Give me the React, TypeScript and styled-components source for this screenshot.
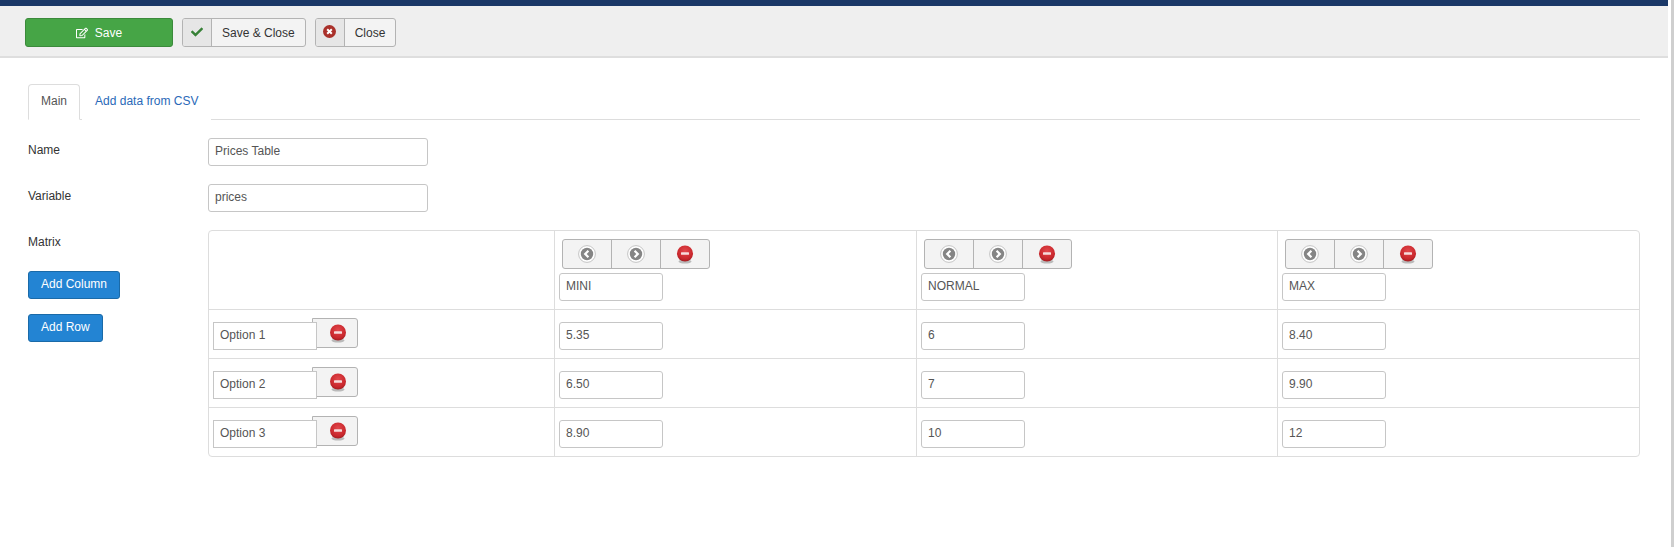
import React from "react";
import styled, { createGlobalStyle } from "styled-components";
import { FaCheck, FaRegEdit } from "react-icons/fa";

const Global = createGlobalStyle`
  html, body { margin: 0; padding: 0; background: #fff; height: 100%; overflow: hidden; }
  body { font-family: "Liberation Sans", Arial, sans-serif; font-size: 12px; color: #333; }
  * { box-sizing: border-box; }
`;

const Shell = styled.div`
  display: flex;
  height: 547px;
`;
const Main = styled.div`
  flex: 1;
  min-width: 0;
`;
const ScrollGutter = styled.div`
  width: 6px;
  background: #fff;
  border-left: 3px solid #fff;
  border-right: 3px solid #cfcfcf;
`;
const TopBar = styled.div`
  height: 6px;
  background: #1a3867;
`;
const Toolbar = styled.div`
  display: flex;
  gap: 9px;
  height: 52px;
  padding: 12px 25px 0;
  background: #efefef;
  border-bottom: 2px solid #dedede;
`;
const SaveButton = styled.button`
  display: flex;
  align-items: center;
  justify-content: center;
  gap: 7px;
  width: 148px;
  height: 29px;
  padding: 0;
  border: 1px solid #3b8a3b;
  border-radius: 3px;
  background: #46a546;
  color: #fff;
  font: 12px "Liberation Sans", Arial, sans-serif;
`;
const ToolButton = styled.button`
  display: flex;
  align-items: stretch;
  height: 29px;
  padding: 0;
  border: 1px solid #b3b3b3;
  border-radius: 3px;
  background: #f3f3f3;
  color: #333;
  font: 12px "Liberation Sans", Arial, sans-serif;
  overflow: hidden;
`;
const ToolIcon = styled.span`
  display: flex;
  align-items: center;
  justify-content: center;
  width: 29px;
  padding-bottom: 2px;
  background: #e6e6e6;
  border-right: 1px solid #b3b3b3;
`;
const ToolLabel = styled.span`
  display: flex;
  align-items: center;
  padding: 0 10px;
`;
const Content = styled.div`
  padding: 26px 28px 0;
`;
const Tabs = styled.div`
  display: flex;
  height: 36px;
  border-bottom: 1px solid #ddd;
  margin-bottom: 18px;
`;
const Tab = styled.div<{ $active?: boolean }>`
  display: flex;
  align-items: center;
  height: 36px;
  padding: 0 12px 2px;
  margin-right: 2px;
  font-size: 12px;
  color: ${(p) => (p.$active ? "#555" : "#2a69b8")};
  background: #fff;
  border: 1px solid ${(p) => (p.$active ? "#ddd" : "transparent")};
  border-bottom: 1px solid ${(p) => (p.$active ? "#fff" : "transparent")};
  border-radius: 4px 4px 0 0;
`;
const FormRow = styled.div`
  display: flex;
  margin-bottom: 18px;
`;
const Side = styled.div`
  flex: 0 0 180px;
`;
const Label = styled.div`
  height: 24px;
  line-height: 24px;
  font-size: 12px;
  color: #333;
`;
const AddButton = styled.button`
  display: block;
  height: 28px;
  padding: 0 12px 2px;
  margin-top: 17px;
  border: 1px solid #1a6aa8;
  border-radius: 3px;
  background: #2384d3;
  color: #fff;
  font: 12px "Liberation Sans", Arial, sans-serif;
  & + & { margin-top: 15px; }
`;
const Field = styled.input<{ $width?: number; $square?: boolean }>`
  display: block;
  width: ${(p) => p.$width ?? 104}px;
  height: 28px;
  padding: 0 6px 2px;
  border: 1px solid #c6c6c6;
  border-radius: ${(p) => (p.$square ? "0" : "3px")};
  background: #fff;
  color: #555;
  font: 12px "Liberation Sans", Arial, sans-serif;
  position: relative;
`;
const MatrixWrap = styled.div`
  flex: 1;
  border: 1px solid #ddd;
  border-radius: 4px;
  overflow: hidden;
`;
const Matrix = styled.table`
  width: 100%;
  table-layout: fixed;
  border-collapse: separate;
  border-spacing: 0;
`;
const Column = styled.col<{ $w?: number }>`
  width: ${(p) => (p.$w ? `${p.$w}px` : "auto")};
`;
const Cell = styled.td`
  padding: 12px 4px 8px;
  vertical-align: top;
  border-top: 1px solid #ddd;
  border-left: 1px solid #ddd;
  tr:first-child > & { border-top: 0; padding-top: 8px; }
  &:first-child { border-left: 0; }
`;
const RowHead = styled(Cell)`
  padding-top: 8px;
`;
const RowHeadInner = styled.div`
  display: flex;
  align-items: flex-start;
`;
const OptionField = styled(Field)`
  margin-top: 4px;
  z-index: 1;
`;
const RemoveRow = styled.button`
  display: flex;
  align-items: center;
  justify-content: center;
  width: 46px;
  height: 30px;
  margin-left: -5px;
  padding: 0 0 0 5px;
  border: 1px solid #b3b3b3;
  border-radius: 0 3px 3px 0;
  background: #f3f3f3;
`;
const NavGroup = styled.div`
  display: flex;
  width: 148px;
  height: 30px;
  margin: 0 0 4px 3px;
  border: 1px solid #b3b3b3;
  border-radius: 3px;
  background: #f3f3f3;
`;
const NavButton = styled.button`
  flex: 1;
  display: flex;
  align-items: center;
  justify-content: center;
  padding: 0;
  border: 0;
  border-left: 1px solid #b3b3b3;
  background: transparent;
  &:first-child { border-left: 0; }
`;

const MinusIcon = ({ id }: { id: string }) => (
  <svg width="18" height="19" viewBox="0 0 18 19" aria-hidden="true">
    <defs>
      <radialGradient id={id} cx="50%" cy="35%" r="70%">
        <stop offset="0%" stopColor="#e2474c" />
        <stop offset="70%" stopColor="#c9272c" />
        <stop offset="100%" stopColor="#951a1e" />
      </radialGradient>
    </defs>
    <ellipse cx="9" cy="16.5" rx="6.5" ry="2" fill="#8a8a8a" opacity="0.55" />
    <circle cx="9" cy="8.5" r="8" fill={`url(#${id})`} />
    <rect x="5" y="7.2" width="8" height="2.6" rx="0.6" fill="#f6dcdc" />
  </svg>
);

const ArrowIcon = ({ dir }: { dir: "left" | "right" }) => (
  <svg width="18" height="18" viewBox="0 0 18 18" aria-hidden="true">
    <circle cx="9" cy="9" r="8.4" fill="#fff" stroke="#c4c4c4" strokeWidth="1" />
    <circle cx="9" cy="9" r="6.2" fill="#858585" />
    <path
      d={dir === "left" ? "M10.4 5.8 7.2 9l3.2 3.2" : "M7.6 5.8 10.8 9l-3.2 3.2"}
      fill="none"
      stroke="#fff"
      strokeWidth="2.2"
    />
  </svg>
);

const CloseIcon = () => (
  <svg width="13" height="13" viewBox="0 0 13 13" aria-hidden="true">
    <circle cx="6.5" cy="6.5" r="6.5" fill="#a9302a" />
    <path d="M4.2 4.2l4.6 4.6M8.8 4.2 4.2 8.8" stroke="#fff" strokeWidth="2" />
  </svg>
);

const columns = ["MINI", "NORMAL", "MAX"];
const rows = [
  { name: "Option 1", values: ["5.35", "6", "8.40"] },
  { name: "Option 2", values: ["6.50", "7", "9.90"] },
  { name: "Option 3", values: ["8.90", "10", "12"] },
];

export default function App() {
  return (
    <Shell>
      <Global />
      <Main>
        <TopBar />
        <Toolbar>
          <SaveButton>
            <FaRegEdit size={12} />
            Save
          </SaveButton>
          <ToolButton>
            <ToolIcon>
              <FaCheck size={12} color="#378137" />
            </ToolIcon>
            <ToolLabel>Save &amp; Close</ToolLabel>
          </ToolButton>
          <ToolButton>
            <ToolIcon>
              <CloseIcon />
            </ToolIcon>
            <ToolLabel>Close</ToolLabel>
          </ToolButton>
        </Toolbar>
        <Content>
          <Tabs>
            <Tab $active>Main</Tab>
            <Tab>Add data from CSV</Tab>
          </Tabs>
          <FormRow>
            <Side>
              <Label>Name</Label>
            </Side>
            <Field $width={220} defaultValue="Prices Table" />
          </FormRow>
          <FormRow>
            <Side>
              <Label>Variable</Label>
            </Side>
            <Field $width={220} defaultValue="prices" />
          </FormRow>
          <FormRow>
            <Side>
              <Label>Matrix</Label>
              <AddButton>Add Column</AddButton>
              <AddButton>Add Row</AddButton>
            </Side>
            <MatrixWrap>
              <Matrix>
                <colgroup>
                  <Column $w={345} />
                  <Column $w={362} />
                  <Column $w={361} />
                  <Column />
                </colgroup>
                <tbody>
                  <tr>
                    <Cell />
                    {columns.map((c) => (
                      <Cell key={c}>
                        <NavGroup>
                          <NavButton>
                            <ArrowIcon dir="left" />
                          </NavButton>
                          <NavButton>
                            <ArrowIcon dir="right" />
                          </NavButton>
                          <NavButton>
                            <MinusIcon id={`col-${c}`} />
                          </NavButton>
                        </NavGroup>
                        <Field defaultValue={c} />
                      </Cell>
                    ))}
                  </tr>
                  {rows.map((r) => (
                    <tr key={r.name}>
                      <RowHead>
                        <RowHeadInner>
                          <OptionField $square defaultValue={r.name} />
                          <RemoveRow>
                            <MinusIcon id={`row-${r.name.replace(" ", "")}`} />
                          </RemoveRow>
                        </RowHeadInner>
                      </RowHead>
                      {r.values.map((v, i) => (
                        <Cell key={i}>
                          <Field defaultValue={v} />
                        </Cell>
                      ))}
                    </tr>
                  ))}
                </tbody>
              </Matrix>
            </MatrixWrap>
          </FormRow>
        </Content>
      </Main>
      <ScrollGutter />
    </Shell>
  );
}
